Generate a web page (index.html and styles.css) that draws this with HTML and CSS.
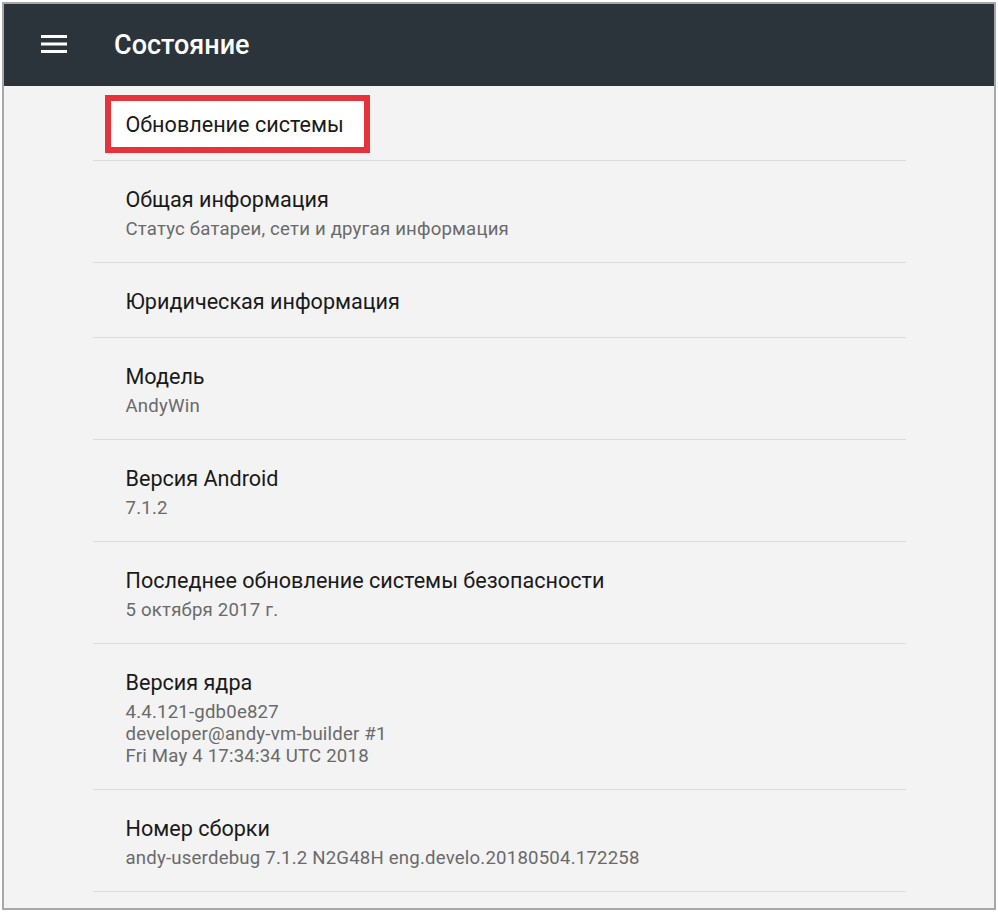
FILE: index.html
```html
<!DOCTYPE html>
<html lang="ru">
<head>
    <meta charset="UTF-8">
    <meta name="viewport" content="width=device-width, initial-scale=1.0">
    <title>Состояние</title>
    <link rel="stylesheet" href="styles.css">
</head>
<body>
    <div class="frame">
        <!-- App bar -->
        <header class="appbar">
            <svg class="menu-icon" width="26" height="18" viewBox="0 0 26 18">
                <rect x="0" y="0" width="26" height="3" fill="#ffffff"/>
                <rect x="0" y="7.5" width="26" height="3" fill="#ffffff"/>
                <rect x="0" y="15" width="26" height="3" fill="#ffffff"/>
            </svg>
            <h1>Состояние</h1>
        </header>

        <!-- Settings list -->
        <div class="content">
            <ul class="list">
                <li class="item highlighted">
                    <span class="marker"></span>
                    <div class="title">Обновление системы</div>
                </li>
                <li class="item">
                    <div class="title">Общая информация</div>
                    <div class="summary">Статус батареи, сети и другая информация</div>
                </li>
                <li class="item">
                    <div class="title">Юридическая информация</div>
                </li>
                <li class="item">
                    <div class="title">Модель</div>
                    <div class="summary">AndyWin</div>
                </li>
                <li class="item">
                    <div class="title">Версия Android</div>
                    <div class="summary">7.1.2</div>
                </li>
                <li class="item">
                    <div class="title">Последнее обновление системы безопасности</div>
                    <div class="summary">5 октября 2017 г.</div>
                </li>
                <li class="item">
                    <div class="title">Версия ядра</div>
                    <div class="summary">4.4.121-gdb0e827<br>developer@andy-vm-builder #1<br>Fri May 4 17:34:34 UTC 2018</div>
                </li>
                <li class="item">
                    <div class="title">Номер сборки</div>
                    <div class="summary">andy-userdebug 7.1.2 N2G48H eng.develo.20180504.172258</div>
                </li>
            </ul>
        </div>
    </div>
</body>
</html>
```

FILE: styles.css
```css
body {
    margin: 0;
    padding: 2px;
    background-color: #ffffff;
    font-family: Roboto, "Noto Sans", Arial, sans-serif;
}
.frame {
    width: 990px;
    height: 904px;
    border: 2px solid #a8a8a8;
    background-color: #f3f3f3;
    overflow: hidden;
    display: flex;
    flex-direction: column;
}
/* App bar */
.appbar {
    height: 82px;
    background-color: #2b343b;
    display: flex;
    align-items: center;
    padding-left: 37px;
    box-sizing: border-box;
    flex-shrink: 0;
}
.menu-icon {
    display: block;
    margin-top: -2px;
}
.appbar h1 {
    margin: 0 0 0 47px;
    font-size: 27px;
    font-weight: 500;
    color: #ffffff;
}
/* List */
.content {
    flex: 1;
    display: flex;
    justify-content: center;
}
.list {
    list-style: none;
    margin: 0;
    padding: 0;
    width: 813px;
}
.item {
    position: relative;
    padding: 26px 0 22px 33px;
    border-bottom: 1px solid #dcdcdc;
}
.title {
    position: relative;
    z-index: 1;
    font-size: 21.6px;
    line-height: 26px;
    color: #1a1a1a;
}
.summary {
    margin-top: 5px;
    font-size: 18.6px;
    line-height: 22px;
    color: #6a6a6a;
    letter-spacing: 0.2px;
}
/* Red marker around the first item */
.marker {
    position: absolute;
    left: 12px;
    top: 9px;
    width: 253px;
    height: 46px;
    border: 6px solid #e6323a;
    background-color: #ffffff;
}
```
